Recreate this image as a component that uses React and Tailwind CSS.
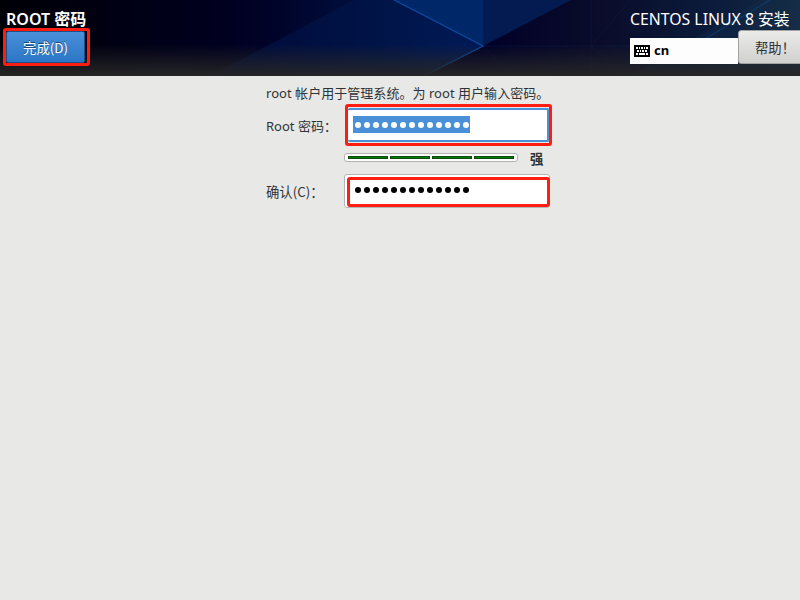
const FONT = "font-['Noto_Sans','Noto_Sans_CJK_SC',sans-serif]";

function Backdrop() {
  return (
    <svg className="absolute inset-0 h-full w-full" viewBox="0 0 800 76" preserveAspectRatio="none">
      <defs>
        <linearGradient id="base" x1="0" x2="1" y1="0" y2="0">
          <stop offset="0" stopColor="#000007" />
          <stop offset="0.1" stopColor="#00000f" />
          <stop offset="0.3" stopColor="#000022" />
          <stop offset="0.6" stopColor="#000028" />
          <stop offset="0.75" stopColor="#0a0c2a" />
          <stop offset="0.9" stopColor="#0b1c3c" />
          <stop offset="1" stopColor="#162b42" />
        </linearGradient>
        <linearGradient id="dusk" gradientUnits="userSpaceOnUse" x1="230" x2="354" y1="0" y2="0">
          <stop offset="0" stopColor="#000833" stopOpacity="0" />
          <stop offset="1" stopColor="#000e3c" />
        </linearGradient>
        <linearGradient id="wedge" gradientUnits="userSpaceOnUse" x1="230" x2="483" y1="0" y2="0">
          <stop offset="0" stopColor="#000a38" />
          <stop offset="0.6" stopColor="#001448" />
          <stop offset="1" stopColor="#001a58" />
        </linearGradient>
        <linearGradient id="fade" x1="0" x2="0" y1="0" y2="1">
          <stop offset="0" stopColor="#262626" stopOpacity="0" />
          <stop offset="1" stopColor="#262626" stopOpacity="0.97" />
        </linearGradient>
      </defs>
      <rect width="800" height="76" fill="url(#base)" />
      <path d="M230 0H360L225 76H230Z" fill="url(#dusk)" />
      <path d="M354 0H394L483 46L424 76H210Z" fill="url(#wedge)" />
      <path d="M394 0H483V46Z" fill="#002868" />
      <path d="M483 0H571L483 46Z" fill="#031b50" />
      <path d="M800 0H760L630 76H800Z" fill="#143350" opacity="0.3" />
      <path d="M394 0L483 46L424 76" fill="none" stroke="#0b489a" strokeWidth="1.4" />
      <path d="M483 46H630M591 46L630 0M591 46L625 76M591 0V76M483 46L512 76" fill="none" stroke="#123474" strokeWidth="0.7" opacity="0.3" />
      <path d="M705 39L770 0" fill="none" stroke="#0f4278" strokeWidth="1.2" opacity="0.7" />
      <rect y="44" width="800" height="32" fill="url(#fade)" />
    </svg>
  );
}

function KeyboardIcon() {
  return (
    <svg className="shrink-0" width="16" height="12" viewBox="0 0 16 12" shapeRendering="crispEdges">
      <rect width="16" height="12" rx="1" fill="#000" />
      <path
        d="M2 2h2v2H2zM5 2h1v2H5zM7 2h2v2H7zM10 2h1v2h-1zM12 2h2v2h-2zM3 5h2v2H3zM6 5h1v2H6zM8 5h2v2H8zM11 5h2v2h-2zM2 8h2v2H2zM5 8h6v2H5zM12 8h2v2h-2z"
        fill="#fff"
      />
    </svg>
  );
}

function Dots({ className }) {
  return (
    <span className={`flex h-[17px] w-[117px] items-center ${className}`}>
      {Array.from({ length: 13 }, (_, i) => (
        <span key={i} className="flex w-[9px] justify-center">
          <span className="h-[6px] w-[6px] rounded-full bg-current" />
        </span>
      ))}
    </span>
  );
}

export default function App() {
  return (
    <div className={`h-[600px] w-[800px] overflow-hidden bg-[#e8e8e6] text-[13px] text-[#2e3436] ${FONT}`}>
      <header className="relative h-[76px] overflow-hidden bg-[#00001c]">
        <Backdrop />
        <div className="relative flex h-full justify-between">
          <div className="pl-[3px] pt-[9px]">
            <h1 className="h-[19px] whitespace-nowrap pl-[3px] text-[16px] font-semibold leading-[20px] text-white">ROOT 密码</h1>
            <div className="h-[38px] w-[87px] rounded-[3px] border-[3px] border-[#ff1d12]">
              <button className="block h-[32px] w-[79px] rounded-[2px] border border-[#1c5187] bg-linear-to-b from-[#4a90d9] to-[#2a76c6] pt-px font-['Noto_Sans_CJK_SC',sans-serif] text-[13.33px] leading-[28px] text-white [text-shadow:0_-1px_#184b7c]">
                完成(D)
              </button>
            </div>
          </div>
          <div className="w-[170px] pt-[9px]">
            <div className="h-[21px] whitespace-nowrap text-[15.8px] leading-[20px] text-white">CENTOS LINUX 8 安装</div>
            <div className="flex">
              <div className="mt-[8px] flex h-[26px] w-[108px] shrink-0 items-center gap-[4px] bg-[#fdfdfd] pl-[4px] text-[13px] font-bold text-black">
                <KeyboardIcon />
                <span className="-mt-px">cn</span>
              </div>
              <button className="h-[34px] w-[66px] shrink-0 whitespace-nowrap rounded-[3px] border border-[#a1a1a1] bg-linear-to-b from-[#ebebea] to-[#d0d0ce] pl-[16px] pt-[3px] text-left text-[13.33px]">
                帮助！
              </button>
            </div>
          </div>
        </div>
      </header>

      <main className="pl-[266px] pt-[7px]">
        <p className="h-[21px] whitespace-nowrap leading-[21px] tracking-[0.04px]">root 帐户用于管理系统。为 root 用户输入密码。</p>
        <div className="flex h-[42px]">
          <label className="w-[79px] whitespace-nowrap leading-[44px]">Root 密码：</label>
          <div className="h-[42px] w-[207px] rounded-[3px] border-[3px] border-[#ff1d12] bg-[#e8e8e6] pt-px shadow-[-1px_0_0_-3px_#4a90d9]">
            <div className="h-[34px] w-full rounded-[2px] border-2 border-l-0 border-[#4a90d9] bg-white pl-[5px] pt-[6px]">
              <Dots className="bg-[#4a90d9] text-white" />
            </div>
          </div>
        </div>
        <div className="flex h-[28px] pl-[78px] pt-[7px]">
          <div className="flex h-[9px] w-[174px] gap-[2px] rounded-[3px] border border-[#b3b3af] bg-white px-[3px] py-[2px]">
            {[0, 1, 2, 3].map((i) => (
              <span key={i} className="h-[3px] w-[40px] border border-[#0d4a10] bg-[#008000]" />
            ))}
          </div>
          <span className="ml-[12px] -mt-[7px] text-[13.33px] font-bold leading-[26px]">强</span>
        </div>
        <div className="flex h-[34px]">
          <label className="w-[78px] whitespace-nowrap font-['Noto_Sans_CJK_SC',sans-serif] text-[13.33px] leading-[35px]">确认(C)：</label>
          <div className="h-[34px] w-[206px] rounded-[3px] border border-[#b6b6b2] bg-white pl-[2px] pt-[2px]">
            <div className="h-[30px] w-[203px] rounded-[3px] border-[3px] border-[#ff1d12] bg-white pl-[3px] pt-[1px]">
              <Dots className="text-black" />
            </div>
          </div>
        </div>
      </main>
    </div>
  );
}
